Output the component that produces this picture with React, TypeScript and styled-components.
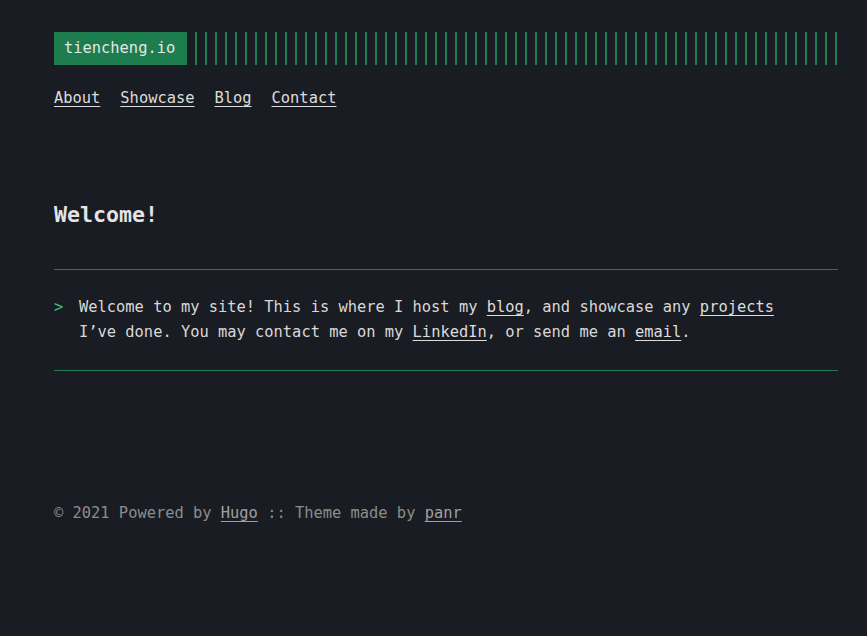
import React from 'react';
import styled, { createGlobalStyle } from 'styled-components';

const GlobalStyle = createGlobalStyle`
  html, body {
    margin: 0;
    padding: 0;
    background: #1a1c23;
  }
  body {
    font-family: "DejaVu Sans Mono", "Liberation Mono", monospace;
    font-size: 15.4px;
    line-height: 25px;
    color: #d8d8d8;
  }
`;

const accent = '#1d7d4e';

const Page = styled.div`
  min-height: 636px;
  padding: 32px 29px 0 54px;
  box-sizing: border-box;
  display: flex;
  flex-direction: column;
`;

const Header = styled.header`
  display: flex;
  flex-direction: column;
  gap: 21px;
`;

const LogoRow = styled.div`
  display: flex;
  align-items: stretch;
  gap: 8px;
  height: 33px;
`;

const Logo = styled.a`
  display: flex;
  align-items: center;
  padding: 0 12px 0 10px;
  background: ${accent};
  color: #e6e6e6;
  text-decoration: none;
`;

const Bars = styled.div`
  flex: 1;
  background: repeating-linear-gradient(
    90deg,
    ${accent} 0,
    ${accent} 2px,
    transparent 2px,
    transparent 10px
  );
`;

const Nav = styled.nav`
  display: flex;
  gap: 20px;
`;

const Link = styled.a<{ $muted?: boolean }>`
  color: ${(p) => (p.$muted ? '#a0a0a0' : '#dcdcdc')};
  text-decoration: underline;
  text-underline-offset: 3px;
`;

const Main = styled.main`
  margin-top: 89px;
`;

const Title = styled.h1`
  margin: 0;
  font-size: 21.6px;
  font-weight: bold;
  line-height: 30px;
  color: #e4e4e4;
`;

const Quote = styled.blockquote`
  margin: 39px 0 0;
  padding: 25px 0;
  border-top: 1px solid ${accent};
  border-bottom: 1px solid ${accent};
  display: flex;
  gap: 16px;
`;

const Marker = styled.span`
  color: #3fbf7a;
  width: 9px;
`;

const QuoteText = styled.p`
  margin: 0;
  max-width: 700px;
`;

const Footer = styled.footer`
  margin-top: 130px;
  color: #8c8c8c;
`;

export default function App() {
  return (
    <>
      <GlobalStyle />
      <Page>
        <Header>
          <LogoRow>
            <Logo href="#">tiencheng.io</Logo>
            <Bars />
          </LogoRow>
          <Nav>
            <Link href="#">About</Link>
            <Link href="#">Showcase</Link>
            <Link href="#">Blog</Link>
            <Link href="#">Contact</Link>
          </Nav>
        </Header>
        <Main>
          <Title>Welcome!</Title>
          <Quote>
            <Marker>&gt;</Marker>
            <QuoteText>
              Welcome to my site! This is where I host my <Link href="#">blog</Link>, and showcase any{' '}
              <Link href="#">projects</Link> I’ve done. You may contact me on my{' '}
              <Link href="#">LinkedIn</Link>, or send me an <Link href="#">email</Link>.
            </QuoteText>
          </Quote>
        </Main>
        <Footer>
          © 2021 Powered by <Link href="#" $muted>Hugo</Link> :: Theme made by{' '}
          <Link href="#" $muted>panr</Link>
        </Footer>
      </Page>
    </>
  );
}
